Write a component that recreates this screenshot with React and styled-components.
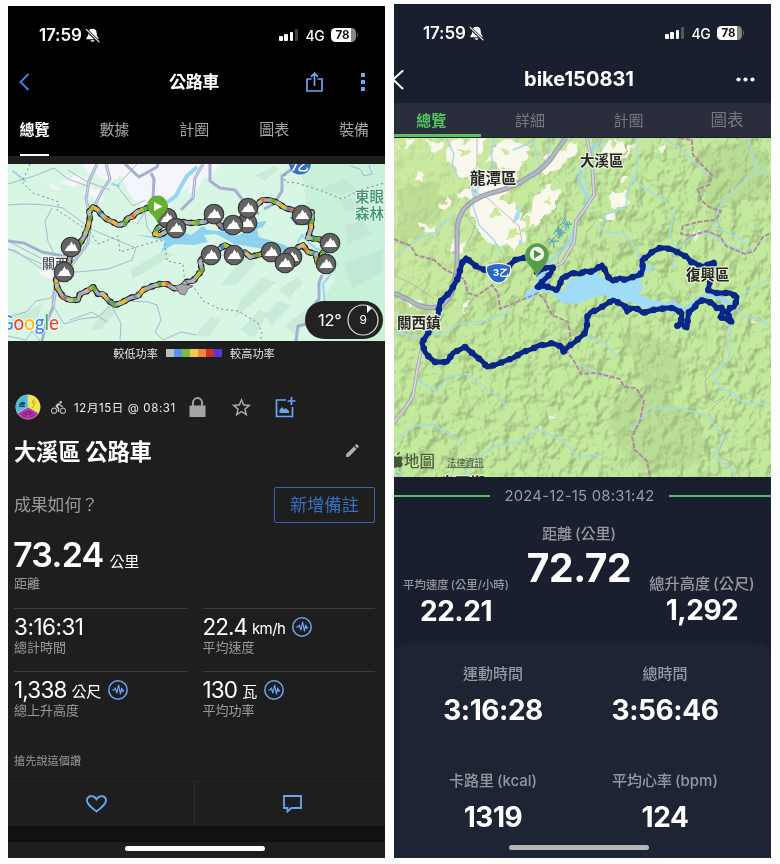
import React from 'react'
import styled, { createGlobalStyle } from 'styled-components'
import { MdDirectionsBike, MdEdit, MdStarBorder } from 'react-icons/md'

const blue = '#6ba4f5'
const green = '#56c25e'

const GlobalStyle = createGlobalStyle`
  * {
    box-sizing: border-box;
  }
  body {
    margin: 0;
    background: #fefefe;
    font-family: Inter, 'Noto Sans CJK TC', sans-serif;
  }
  svg {
    display: block;
    flex: none;
  }
`
const Page = styled.div`
  display: flex;
  gap: 9px;
  height: 864px;
  padding: 0 9px 0 8px;
  overflow: hidden;
`
const Phone = styled.div`
  width: 377px;
  height: ${props => 858 - props.top}px;
  margin-top: ${props => props.top}px;
  background: ${props => props.background};
  color: #fff;
  overflow: hidden;
  display: flex;
  flex-direction: column;
`


/* Status bar */

const StatusRow = styled.div`
  display: flex;
  align-items: center;
  flex: none;
  height: 58px;
  padding: 0 27px 0 ${props => props.indent}px;
`
const Clock = styled.div`
  font-size: 17px;
  font-weight: 600;
  line-height: 20px;
  letter-spacing: -0.15px;
  margin-right: 3px;
`
const Network = styled.div`
  font-size: 14px;
  font-weight: 500;
  letter-spacing: -0.3px;
  margin: 0 6px 0 7px;
`
const Bars = styled.div`
  display: flex;
  align-items: flex-end;
  gap: 1.7px;
  margin-left: auto;
`
const Bar = styled.div`
  width: 3.6px;
  height: ${props => props.size}px;
  border-radius: 1px;
  background: ${props => props.off ? 'rgba(255,255,255,0.25)' : '#fff'};
`
const Battery = styled.div`
  width: 25px;
  height: 13.5px;
  border-radius: 4.5px;
  background: linear-gradient(90deg, #fff 80%, #858585 80%);
  color: #111;
  font-size: 11.5px;
  font-weight: 700;
  line-height: 14px;
  text-align: center;
  padding-right: 1px;
`
const BatteryTip = styled.div`
  width: 1.5px;
  height: 4px;
  margin-left: 1px;
  border-radius: 0 2px 2px 0;
  background: #666;
`

const StatusBar = ({ background, indent }) => (
  <StatusRow indent={indent}>
    <Clock>17:59</Clock>
    <svg width="15" height="15" viewBox="0 0 15 15">
      <path d="M7.500 .8c-2.800 0-4.200 2-4.200 4.200 0 2.800-.6 3.800-1.900 5v1.200h12.200V10c-1.300-1.200-1.900-2.200-1.900-5C11.700 2.800 10.300.8 7.500.8zM5.400 12.200a2.200 2.200 0 0 0 4.200 0z" fill="#fff" />
      <path d="M1 1.500 14 14" stroke={background} strokeWidth="3" />
      <path d="M1.200 1.300 14 13.800" stroke="#fff" strokeWidth="1.100" strokeLinecap="round" />
    </svg>
    <Bars>
      <Bar size={4.5} />
      <Bar size={6.5} />
      <Bar size={9} />
      <Bar size={11.5} off />
    </Bars>
    <Network>4G</Network>
    <Battery>78</Battery>
    <BatteryTip />
  </StatusRow>
)

const HomeIndicator = styled.div`
  width: 140px;
  height: 5px;
  border-radius: 3px;
  background: ${props => props.color};
  margin: ${props => props.space}px auto 0 ${props => props.left}px;
`


/* Left phone */

const Black = styled.div`
  background: #000;
  flex: none;
  height: 150px;
`
const NavBar = styled.div`
  display: grid;
  grid-template-columns: 98px 1fr 110px;
  align-items: center;
  height: 36px;
  padding: 0 4px 0 11px;
`
const NavTitle = styled.div`
  font-size: 17px;
  font-weight: 700;
  line-height: 24px;
  text-align: center;
  letter-spacing: -0.3px;
`
const NavActions = styled.div`
  display: flex;
  align-items: center;
  justify-content: flex-end;
  gap: 38px;
  padding-right: 16px;
`
const Tabs = styled.div`
  display: flex;
  justify-content: space-between;
  margin-top: 16px;
  padding: 0 16px 0 11.500px;
`
const Tab = styled.div`
  height: 40px;
  line-height: 28px;
  font-size: 15px;
  letter-spacing: -0.1px;
  font-weight: ${props => props.active ? 700 : 400};
  color: ${props => props.active ? '#fff' : '#a6a6a6'};
  border-bottom: 2px solid ${props => props.active ? '#fff' : 'transparent'};
`
const MapBox = styled.div`
  position: relative;
  flex: none;
  height: ${props => props.height}px;
  margin-top: ${props => props.gap || 0}px;
  overflow: hidden;
`
const Weather = styled.div`
  position: absolute;
  right: 2px;
  bottom: 2px;
  width: 78px;
  height: 38px;
  border-radius: 19px;
  background: #222;
  display: flex;
  align-items: center;
  padding-left: 13px;
  gap: 5px;
  font-size: 16.500px;
  letter-spacing: -0.2px;
`
const Legend = styled.div`
  display: flex;
  align-items: center;
  justify-content: center;
  gap: 8px;
  flex: none;
  height: 23px;
  padding-right: 5px;
  font-size: 11.200px;
  color: #e4e4e4;
`
const Swatches = styled.div`
  display: flex;
`
const Swatch = styled.div`
  width: 8px;
  height: 8px;
  background: ${props => props.color};
`
const Meta = styled.div`
  display: flex;
  align-items: center;
  flex: none;
  height: 36px;
  margin-top: 25px;
  padding-left: 7px;
`
const MetaDate = styled.div`
  width: 115px;
  margin-left: 8px;
  padding-bottom: 1px;
  font-size: 11.500px;
  letter-spacing: 0.6px;
  color: #eee;
  white-space: nowrap;
`
const TitleRow = styled.div`
  display: flex;
  align-items: center;
  justify-content: space-between;
  flex: none;
  height: 40px;
  margin-top: 5px;
  padding: 0 24px 0 6px;
  font-size: 22.300px;
  font-weight: 700;
  letter-spacing: -0.2px;
`
const NoteRow = styled.div`
  display: flex;
  align-items: center;
  justify-content: space-between;
  flex: none;
  height: 36px;
  margin-top: 17px;
  padding: 0 10px 0 6px;
  font-size: 17px;
  line-height: 24px;
  letter-spacing: -0.2px;
  color: #999;
`
const NoteButton = styled.button`
  width: 101px;
  height: 36px;
  padding: 0 0 1px;
  border: 1px solid #3565b4;
  border-radius: 2px;
  background: none;
  color: #3a6fc6;
  font: inherit;
  letter-spacing: 0.2px;
`
const Hero = styled.div`
  display: flex;
  align-items: baseline;
  gap: 6px;
  flex: none;
  height: 46px;
  margin-top: 9px;
  padding-left: 5px;
  font-size: 34px;
  font-weight: 600;
  line-height: 46px;
  letter-spacing: -0.7px;
`
const Unit = styled.span`
  font-size: 15px;
  font-weight: 400;
  line-height: 20px;
  letter-spacing: ${props => props.tight ? -0.6 : -0.3}px;
`
const Caption = styled.div`
  font-size: 13px;
  line-height: 18px;
  color: #9a9a9a;
`
const HeroCaption = styled(Caption)`
  flex: none;
  padding-left: 6px;
  margin-top: -4px;
`
const Stats = styled.div`
  display: grid;
  grid-template-columns: 1fr 1fr;
  grid-auto-rows: 63px;
  column-gap: 16px;
  margin-top: 16px;
  padding: 0 10px 0 6px;
  flex: none;
`
const Stat = styled.div`
  border-top: 1px solid #3c3c3c;
  padding-top: 4px;
`
const StatValue = styled.div`
  display: flex;
  align-items: center;
  height: 28px;
  font-size: 22.5px;
  line-height: 28px;
  letter-spacing: ${props => props.spacing}px;

  ${Unit} {
    margin: 4px 7px 0 5px;
  }
`
const StatCaption = styled(Caption)`
  margin-top: -3px;
`
const FirstLike = styled.div`
  flex: none;
  margin-top: 19px;
  padding-left: 6px;
  font-size: 11.200px;
  line-height: 16px;
  color: #9a9a9a;
`
const ActionBar = styled.div`
  display: grid;
  grid-template-columns: 187px 1fr;
  flex: none;
  height: 45px;
  margin-top: 12px;
  border-top: 1px solid #262626;
`
const Action = styled.div`
  display: flex;
  align-items: center;
  justify-content: center;
  padding-left: 5px;

  &:first-child {
    padding: 0 10px 0 0;
    border-right: 1px solid #2b2b2b;
  }
`
const DarkStrip = styled.div`
  flex: none;
  height: 16px;
  background: #111;
`

const Pulse = () => (
  <svg width="20" height="20" viewBox="0 0 20 20" fill="none" stroke={blue}>
    <circle cx="10" cy="10" r="9.200" strokeWidth="1.500" />
    <path d="M4 10h2l1.300-2 1.600 5 1.700-8 1.800 9 1.300-6 1.100 3.500L16 10" strokeWidth="1.200" strokeLinejoin="round" />
  </svg>
)

const ride = 'M147 208L142 210L137 212L132 217L128 218L124 224L118 225L113 222L108 220L104 217L100 213L98 210L93 207L89 212L90 217L88 227L84 237L79 245L71 252L69 262L64 272L56 279L57 287L63 297L70 300L78 300L80 294L87 291L93 287L98 294L103 294L109 301L115 305L121 303L130 298L138 296L143 290L153 286L160 284L167 284L173 288L180 289L186 282L193 281L198 275L202 270L200 261L207 255L218 250L225 245L230 248L235 255L245 252L250 257L258 255L270 252L280 260L285 263L292 257L297 248L303 245L308 252L316 254L317 262L325 264L322 254L330 243L318 239L308 238L311 228L312 212L302 215L293 210L285 208L278 203L270 200L262 200L257 205L248 208L247 223L233 225L223 228L218 223L214 214L205 222L190 223L183 222L176 228L169 230L160 235L155 234L157 229L164 224L167 218'

const powerDashes = [
  ['#a4c43c', '9 13', 0],
  ['#3f8ae8', '4 25', 3],
  ['#f3b437', '5 18', 9],
  ['#ee6f2c', '3 28', 16],
  ['#67ac3f', '5 21', 27],
  ['#b8b9c0', '4 17', 12],
]

const peaks = [
  [167, 218], [176, 228], [71, 247], [64, 272], [247, 223], [214, 214],
  [233, 225], [248, 208], [302, 215], [330, 243], [326, 264], [292, 257],
  [271, 252], [285, 263], [234, 255], [211, 255],
]

const Peak = ({ x, y }) => (
  <g transform={`translate(${x} ${y})`}>
    <circle r="9.800" fill="#646464" stroke="#303030" strokeWidth="1.100" />
    <path d="M-6.500 4l3.500-5.500 1 .5 2.500-4.500 2 3.500 1.200-1L7 4z" fill="#fff" />
  </g>
)

const MapLabel = styled.text`
  font-size: ${props => props.size}px;
  font-weight: ${props => props.weight || 500};
  fill: ${props => props.color};
  stroke: ${props => props.halo || 'none'};
  stroke-width: 2.5px;
  stroke-linejoin: round;
  paint-order: stroke;
`
const GoogleMark = styled.text`
  font-family: Lato, sans-serif;
  font-size: 21px;
  font-weight: 500;
  stroke: #fff;
  stroke-width: 1.5px;
  paint-order: stroke;
`

const PowerMap = () => (
  <svg width="377" height="177" viewBox="8 164 377 177">
    <rect x="8" y="164" width="377" height="177" fill="#d8f6e4" />
    <path d="M300 164h85v177H330l-15-30 20-30-5-30-20-25z" fill="#c9f0d9" />
    <g fill="#f5f6fb">
      <path d="M95 164h55l-6 8-8-2-4 6h-12l-9 6-14-6z" />
      <path d="M124 170l32-6h44l-6 18-18 15-12 18-18-4-15-15-8-14z" />
      <path d="M45 181l19 9-12-1zM60 183l18-9 11 6-14 7zM82 193l9-8 5 12zM82 164l6 10 8-6-2-4zM38 272l8-5 14 4 1 6-14 1z" />
      <path d="M195 164h26l-10 12-8 2-6 12-9 4zM90 192l10-4 4 12-8 3z" />
    </g>
    <g fill="#bfe3d2" opacity=".55">
      <path d="M240 300l22-22 14 4-22 20-20 16zM278 290l18-12 8 4-15 16zM220 286l26-32 10 9-20 22zM240 330l20-20 8 3-14 25zM265 315l14-14 12 5-20 20z" />
      <path d="M320 190l25-12 12 12-16 5zM345 225l18-5 8 14-24 10zM340 200l32-3-13 13-14 1zM130 270l35-20 8 5-40 24zM285 325l20-15 6 6-16 20z" />
      <path d="M343 264l40-15v22l-30 18zM195 335l16-18 10 3-12 17zM12 316l30-12-4 14-28 13zM255 176l18-10 6 3-14 12zM90 330l18-25 12 2-18 22z" />
    </g>
    <g fill="none" stroke="#96d6ee" strokeWidth="3" strokeLinecap="round">
      <path d="M196 168l-9 8-7 12-4 8-7 5" strokeWidth="4" />
      <path d="M298 242l4-7 8 9 7 5 8 2 8 8 2 10-12 15 2 22" strokeWidth="2" />
      <path d="M13 171l12 10M112 184l7 2" strokeWidth="2" />
    </g>
    <path d="M136 235l14 1 8 2 10-5 15-1 8 3 12-9 4 4 22 2 8 4 12-6 8-8 10-1-4 6-6 2 2 8 14 4 12 4 5 4-8 3-30-5-18-3-18-10-12 1 4 7-14 3-20-1-13 8 4-11-13-3z" fill="#8fd2ef" />
    <g fill="none" stroke="#adb5d0" strokeWidth="1">
      <path d="M8 184l26-8 20-8 14 11 22 8M8 205q30-3 55 3l30 22 43 18-4 12-24 9-30 3-35-2-27-19-8-2M52 208l-7 13 3 20 12 25M8 241l42 22M8 249l45 20 4-4M59 280l-8 18-15 3-10 11-18 5M54 284l-2 20 12 20 16-5 18-2 13-12 10 18-1 17M70 320l22-8 15 10M40 341l-8-10-6 9-18-4M120 304l8-3 20 1 9 3 4 15-6 12 8 8 18-8 15 3M137 224l8-12 2 15 6 8" />
      <path d="M137 164l-20 22 16 20 12-6M110 190l-22-8-20-12M350 166l10 3 4 7 8-2-3-9" />
    </g>
    <g fill="none" stroke="#a6afcf" strokeWidth="3" strokeLinejoin="round">
      <path d="M97 164l-8 17-3 18 5 20-3 24-18 24-13 15-4 25-7 17-4 17M106 164l4 15-8 12-8 16M125 164l14 13 18-10 1-4M151 173l3 6-1 20" />
      <path d="M8 241l16 2 18 9 26 5M203 164l-8 14-2 20-12 12M210 164v17l10 7 15 2 14 18 10 6M299 164l-17 12v15l-8 13-10 5M322 275l-3 8v16l-11 12 2 12-12 3-2 15" />
    </g>
    <g fill="none" stroke="#e3e8f3" strokeWidth=".8">
      <path d="M97 164l-8 17-3 18 5 20-3 24-18 24-13 15-4 25M106 164l4 15-8 12-8 16M203 164l-8 14-2 20" />
    </g>
    <path d="M30 164l-8 18 11 11 26 9-2 8 33 22 8 12 20-8 2 16 40-12 5 4 2 17 16 3 2 20 10 5 8 12 17 8 18 2 20 12 4 10-4 18M285 174v8l12 1 25 8 20 8 20-10 23-6" fill="none" stroke="#6f8d87" strokeWidth="1" strokeDasharray="2 3" />
    <MapLabel x="42" y="268" size="13" color="#454a52" halo="#f5fbf8">關西</MapLabel>
    <MapLabel x="355" y="202" size="14.500" color="#43907b" halo="#d8f4e4">東眼山</MapLabel>
    <MapLabel x="355" y="219" size="14.500" color="#43907b" halo="#d8f4e4">森林遊</MapLabel>
    <path d="M288 158h24q-1 12-6 15-6 3-12 0-5-3-6-15z" fill="#3a70c5" />
    <MapLabel x="291" y="171" size="11" color="#fff" weight={700}>7乙</MapLabel>
    <path d="M290 217l6 8h12l3-7z" fill="#3567b1" />
    <path d={ride} fill="none" stroke="#252525" strokeWidth="5.600" strokeLinejoin="round" />
    <path d={ride} fill="none" stroke="#252525" strokeWidth="6.600" strokeLinecap="round" strokeDasharray="0 8" />
    <path d={ride} fill="none" stroke="#abaab6" strokeWidth="3.600" strokeLinejoin="round" />
    {powerDashes.map(([color, dash, offset]) => (
      <path key={color} d={ride} fill="none" stroke={color} strokeWidth="3.600" strokeDasharray={dash} strokeDashoffset={offset} />
    ))}
    <path d="M175 286l7-2 11 2-5 3-3 6-5-1z" fill="#a7a7ad" stroke="#444" strokeWidth=".6" />
    {peaks.map(([x, y]) => <Peak key={`${x}-${y}`} x={x} y={y} />)}
    <path d="M157.500 222c-2-7-10-9-10-16a10 10 0 0 1 20 0c0 7-8 9-10 16z" fill="#63b22f" stroke="#4b9322" strokeWidth=".8" />
    <path d="M154 202l8.500 4.500-8.500 4.500z" fill="#fff" />
    <GoogleMark x="0" y="330" textLength="59" lengthAdjust="spacingAndGlyphs">
      <tspan fill="#4285f4">G</tspan>
      <tspan fill="#ea4335">o</tspan>
      <tspan fill="#fbbc05">o</tspan>
      <tspan fill="#4285f4">g</tspan>
      <tspan fill="#34a853">l</tspan>
      <tspan fill="#ea4335">e</tspan>
    </GoogleMark>
  </svg>
)

const stats = [
  { value: '3:16:31', label: '總計時間', spacing: -0.5 },
  { value: '22.4', unit: 'km/h', label: '平均速度', chart: true, tight: true, spacing: -1 },
  { value: '1,338', unit: '公尺', label: '總上升高度', chart: true },
  { value: '130', unit: '瓦', label: '平均功率', chart: true },
]

const RidePhone = () => (
  <Phone top={6} background="#1e1e1e">
    <Black>
      <StatusBar background="#000" indent={31} />
      <NavBar>
        <svg width="11" height="18" viewBox="0 0 11 18" fill="none" stroke="#3d83f0" strokeWidth="1.900">
          <path d="M9.500 1 1.500 9l8 8" />
        </svg>
        <NavTitle>公路車</NavTitle>
        <NavActions>
          <svg width="17" height="20" viewBox="0 0 17 20" fill="none" stroke={blue} strokeWidth="1.700">
            <path d="M5.500 7H1v12h15V7h-4.500M8.500 14V1.500M5 4.800l3.500-3.500L12 4.800" />
          </svg>
          <svg width="4" height="18" viewBox="0 0 4 18" fill={blue}>
            <path d="M0 0h4v4H0zM0 7h4v4H0zM0 14h4v4H0z" />
          </svg>
        </NavActions>
      </NavBar>
      <Tabs>
        <Tab active>總覽</Tab>
        <Tab>數據</Tab>
        <Tab>計圈</Tab>
        <Tab>圖表</Tab>
        <Tab>裝備</Tab>
      </Tabs>
    </Black>
    <MapBox height={177} gap={8}>
      <PowerMap />
      <Weather>
        <span>12°</span>
        <svg width="32" height="32" viewBox="0 0 32 32">
          <circle cx="16" cy="16" r="15" fill="none" stroke="#ddd" strokeWidth="1.200" />
          <path d="M20 1l5 3-5 5z" fill="#fff" />
          <MapLabel x="12.500" y="20" size="12" color="#fff" weight={400}>9</MapLabel>
        </svg>
      </Weather>
    </MapBox>
    <Legend>
      <span>較低功率</span>
      <Swatches>
        {['#bdbdc1', '#5795ea', '#7ebd3c', '#f1c94e', '#ec8c39', '#c6302d', '#5a36d2'].map(color => (
          <Swatch key={color} color={color} />
        ))}
      </Swatches>
      <span>較高功率</span>
    </Legend>
    <Meta>
      <svg width="26" height="26" viewBox="0 0 26 26">
        <circle cx="13" cy="13" r="12.500" fill="#bfc3bd" />
        <path d="M13 13V1A12 12 0 0 0 2.600 19z" fill="#4fb8dc" />
        <path d="M13 13V1a12 12 0 0 1 10.400 18z" fill="#f0eb42" />
        <path d="M13 13 2.600 19a12 12 0 0 0 20.800 0z" fill="#b936ad" />
        <path d="M13 13V1M13 13 2.600 19M13 13l10.400 6" stroke="#d6d6cc" strokeWidth=".8" />
        <path d="M4 11l3-3 3 1-1 2zM4 12.500h6" stroke="#164c63" fill="#164c63" />
        <path d="M19 5l-2 4 3 1-3 4m1-7 3 1" stroke="#c8a421" fill="none" />
        <g fill="none" stroke="#6b1768" strokeWidth=".7">
          <circle cx="9.500" cy="20.500" r="2" />
          <circle cx="16.500" cy="20.500" r="2" />
          <path d="M9.500 20.500l2.500-3h3l-2 3zM15 17l1.500 3.500" />
        </g>
      </svg>
      <MdDirectionsBike size={15} color="#ccc" style={{ marginLeft: 10 }} />
      <MetaDate>12月15日 @ 08:31</MetaDate>
      <svg width="17" height="20" viewBox="0 0 17 20">
        <path d="M.5 8.500h16V20H.5z" fill="#a4a4a4" />
        <path d="M4 9V5.500a4.500 4.500 0 0 1 9 0V9" fill="none" stroke="#a4a4a4" strokeWidth="1.900" />
      </svg>
      <MdStarBorder size={23} color="#a8a8a8" style={{ marginLeft: 24 }} />
      <svg width="21" height="21" viewBox="0 0 21 21" fill="none" stroke={blue} strokeWidth="1.700" style={{ marginLeft: 22 }}>
        <path d="M11 3H1.500v16.500H17.500V10M16.500 0v8M12.500 4h8" />
        <path d="M4.500 16v-3l2.500-3 2 2.500 1.500-1.500 3.500 3v2z" fill={blue} stroke="none" />
      </svg>
    </Meta>
    <TitleRow>
      大溪區 公路車
      <MdEdit size={17} color="#b0b0b0" />
    </TitleRow>
    <NoteRow>
      成果如何？
      <NoteButton>新增備註</NoteButton>
    </NoteRow>
    <Hero>73.24<Unit>公里</Unit></Hero>
    <HeroCaption>距離</HeroCaption>
    <Stats>
      {stats.map(stat => (
        <Stat key={stat.label}>
          <StatValue spacing={stat.spacing || -0.85}>
            {stat.value}
            {stat.unit && <Unit tight={stat.tight}>{stat.unit}</Unit>}
            {stat.chart && <Pulse />}
          </StatValue>
          <StatCaption>{stat.label}</StatCaption>
        </Stat>
      ))}
    </Stats>
    <FirstLike>搶先說這個讚</FirstLike>
    <ActionBar>
      <Action>
        <svg width="21" height="18" viewBox="0 0 21 18" fill="none" stroke={blue} strokeWidth="1.900">
          <path d="M10.500 16.500C5 12 1 9.200 1 5.500 1 .5 7.500-.5 10.500 4.200 13.500-.5 20 .5 20 5.500c0 3.700-4 6.500-9.500 11z" />
        </svg>
      </Action>
      <Action>
        <svg width="19" height="18" viewBox="0 0 19 18" fill="none" stroke={blue} strokeWidth="1.800">
          <path d="M1 1h17v12H8.500l-4 3.500V13H1z" />
        </svg>
      </Action>
    </ActionBar>
    <DarkStrip />
    <HomeIndicator color="#fff" space={4} left={117} />
  </Phone>
)


/* Right phone */

const RouteNav = styled.div`
  display: grid;
  grid-template-columns: 20px 1fr 20px;
  align-items: center;
  flex: none;
  height: 41px;
  padding: 0 15px 7px 0;
`
const RouteTitle = styled.div`
  font-size: 20px;
  font-weight: 700;
  line-height: 26px;
  text-align: center;
  letter-spacing: 0;
  padding-left: 8px;
`
const RouteTabs = styled.div`
  display: grid;
  grid-template-columns: repeat(4, 98.600px);
  flex: none;
  height: 34px;
  margin-left: -12px;
  background: #292d3c;
`
const RouteTab = styled.div`
  height: 33.500px;
  line-height: 35px;
  text-align: center;
  font-size: ${props => props.size || 15}px;
  font-weight: ${props => props.active ? 700 : 400};
  color: ${props => props.active ? green : '#777982'};
  border-bottom: 3px solid ${props => props.active ? green : 'transparent'};
`
const DateRow = styled.div`
  display: flex;
  align-items: center;
  flex: none;
  height: 37px;
  gap: 13px;
  color: #999ca5;
  font-size: 14.800px;
`
const Line = styled.div`
  height: 2px;
  background: ${green};
  flex: none;
  width: ${props => props.width}px;
`
const DateText = styled.div`
  flex: 1;
  text-align: center;
  white-space: nowrap;
  letter-spacing: 0.25px;
`
const Summary = styled.div`
  display: grid;
  grid-template-columns: 124px 122px 1fr;
  align-items: start;
  flex: none;
  height: 130px;
  padding-right: 7px;
  text-align: center;
  white-space: nowrap;
`
const Metric = styled.div`
  padding-top: ${props => props.drop || 0}px;
`
const MetricLabel = styled.div`
  color: #9698a0;
  font-size: ${props => props.size || 15}px;
  font-weight: 500;
  line-height: 20px;
  word-spacing: -1px;
`
const MetricValue = styled.div`
  font-size: ${props => props.size || 28}px;
  font-weight: 700;
  line-height: ${props => props.lineHeight || 34}px;
  letter-spacing: -0.45px;
`
const SideValue = styled(MetricValue)`
  margin-top: -1px;
`
const Card = styled.div`
  flex: 1;
  border-radius: 14px 14px 0 0;
  background: #1d2535;
`
const CardGrid = styled.div`
  display: grid;
  grid-template-columns: 172px 172px;
  grid-auto-rows: 107px;
  padding: 20px 0 0 13px;
  height: 200px;
  text-align: center;
`
const CardValue = styled(MetricValue)`
  margin-top: 9px;
`

const track = 'M537 272L545 268L553 267L551 273L546 278L542 282L537 287L545 286L551 288L557 290L560 284L562 278L567 276L572 273L580 274L585 271L590 272L595 270L602 265L605 270L608 277L613 281L620 278L625 280L630 278L636 276L640 275L643 269L642 260L648 256L652 252L656 250L660 248L666 248L673 250L679 253L687 257L691 262L695 263L701 267L707 265L714 262L713 268L711 275L710 282L708 290L716 293L723 293L730 293L737 297L736 302L734 307L730 308L727 313L732 322L726 319L720 317L723 312L722 307L717 308L712 303L703 300L697 303L695 307L689 312L688 317L687 328L682 324L677 326L681 322L682 313L673 308L667 308L660 309L653 310L643 313L638 309L630 308L627 312L625 306L619 303L613 300L605 305L597 310L591 312L587 317L587 325L585 333L575 342L569 346L563 352L562 347L552 343L546 345L540 345L532 349L523 352L513 358L505 361L495 365L487 367L482 361L477 357L471 352L465 347L459 350L453 353L447 362L435 362L429 357L425 352L422 343L428 333L438 321L438 315L440 302L450 292L458 278L462 263L466 258L477 267L490 272L507 268L515 260L527 257L537 260'

const RouteMap = () => (
  <svg width="377" height="339" viewBox="394 138 377 339">
    <defs>
      <filter id="relief" x="0" y="0" width="100%" height="100%" colorInterpolationFilters="sRGB">
        <feTurbulence type="fractalNoise" baseFrequency="0.075 0.06" numOctaves="3" seed="14" />
        <feDiffuseLighting surfaceScale="9" diffuseConstant="1.250" lightingColor="#fff">
          <feDistantLight azimuth="225" elevation="56" />
        </feDiffuseLighting>
      </filter>
      <filter id="ragged" filterUnits="userSpaceOnUse" x="394" y="138" width="377" height="339">
        <feTurbulence type="fractalNoise" baseFrequency=".09" numOctaves="2" seed="5" />
        <feDisplacementMap in="SourceGraphic" scale="18" xChannelSelector="R" yChannelSelector="G" />
      </filter>
      <linearGradient id="valley" x1="0" y1="0" x2="1" y2=".7">
        <stop offset=".1" stopColor="#d0eaa2" stopOpacity=".65" />
        <stop offset=".42" stopColor="#d0eaa2" stopOpacity="0" />
      </linearGradient>
    </defs>
    <rect x="394" y="138" width="377" height="339" fill="#c3e99d" />
    <rect x="394" y="138" width="377" height="339" filter="url(#relief)" opacity=".2" style={{ mixBlendMode: 'multiply' }} />
    <rect x="394" y="138" width="377" height="339" fill="url(#valley)" />
    <g fill="#a3c480" opacity=".3" filter="url(#ragged)">
      <path d="M610 410l20-22 38 8 30 20 10 35-20 20h-45l-28-25zM700 150l45-10 26 20v35l-45 10-18 25zM620 330l50 12 20 30-35 35-22-45zM400 300l45 20-20 25-30-8zM398 190l40-10 10 25-30 35-24 5z" />
    </g>
    <g fill="#faf7ed" filter="url(#ragged)">
      <path d="M425 142l12-3 8 5-8 8-10-2zM447 146l9-5 12 2v-5h18l-3 12-7 6 2 15-5 7-14-4-6-12-7-2zM470 171l28 6 12-8 8 9-10 15-22 15-18-3zM470 205l14-10 22 7 16 12 2 10-2 14-6 15-10-6-14-2-12-18-9-9z" />
      <path d="M452 154l10 2 4 14-10-3zM401 139l16-1-2 6-12 4zM415 178l7-3 2 6-6 1zM460 192l14-7 3 8-8 5zM437 204l12-4-1 8-10 2zM417 222l12 5 12 3-4 4-17-5zM450 245l16-5-2 10-11 4zM535 195l12-8 12 6-5 15-12 9-9 8-8-6 8-12z" />
      <path d="M492 145l16-5 22 7-7 10-12 4-9 12-12-11zM544 158l14-9 18-6 3 9-15 11-18 11zM508 155l14 7-6 9-12-2zM604 146l13-5 8 2-4 9-13 14-8-1zM611 190l15 2-2 11-10 6-6-8zM599 218l10-4 5 2-10 7zM628 147l5-3-2 12-9 4zM662 145l3 4-2 6-4-2zM620 179l6-2 3 4-8 2zM692 230l6-1 5 5-9 2zM550 415l5-2-2 4zM539 431l4-2v3zM410 299l12 3-3 4-10-2zM466 303l7-1-3 8-7-2zM752 321l5 1-4 3z" />
    </g>
    <g fill="#cde99f" filter="url(#ragged)">
      <path d="M474 176l8 2-3 5-7-1zM496 183l9-5 3 6-8 4zM489 213l8-4 5 7-9 3zM507 232l8-5 4 6-7 6zM459 150l6-2 2 7-6 2zM545 196l6 2-4 6zM499 150l8-4 3 7-7 3z" />
    </g>
    <g fill="none" stroke="#a5dbe6" strokeWidth="1.500" strokeLinejoin="round">
      <path d="M396 255l25-18 15-5 8-11 18-5M446 138l8 16-2 11 7 14M494 138l-3 15 3 15-14 16-8 18 7 23 15 15 8 14M513 150l20-8 7 25-6 13M551 142l-4 21-20 12M605 138l-20 33 3 25M636 138l2 28-8 20-4 20-21 9-4 14M630 175l10 10 25 16 4-2M664 138l20 13 12 13 14 11" />
      <path d="M748 138l9 32-27 24-12 15-3 18 21 10 19 15M757 170l14 6M675 210l-5 20 3 15M700 232l-25 18-3 20M700 230l15 8 31 16M771 278l-15 8-15 10M712 295l15 4 16 17 15 3 13 8M731 323l-2 37-16 14 7 14 14 5 9 10 28 1M395 440l18-14 21-1 20 12 9 7M463 475l18-19 12-9 32-7 12-11 26 12 15 16 27-3M395 470l8 5M415 379l14 8 8 4 11-15 20-2 28 22 12 11M580 335l25 8 12 15M580 365l25 12M632 430l5-8 18-13 25-1 28 8 12 17 6 4-13 20 19 12 3 8M395 332l20 5 30-4 15-10 25-2 25-10M602 232l22 2 14 17 4 12" />
    </g>
    <g fill="none" stroke="#a1d7ed" strokeWidth="3">
      <path d="M598 142l-17 22-2 18 10 18-12 20-7 22-17 17-14 10M535 290l-10 6" />
      <path d="M671 302l14 8 12-10 12-6 18 8 6 10" strokeWidth="4" />
    </g>
    <path d="M471 190l5-2 2 7-5 4zM516 212l6-8-3 15-7 5zM519 239l4 3-4 4z" fill="#b3dce9" />
    <path d="M524 292l12-5 2-22 8 2 5 12-9 9 12 5 10-3 6-13 4 3 8-4 15-3 6 5 8 5 9-1 12-4 4-8 6-2 14-3-5 5-9 4-2 8 4 4-4 9 10 4 15 4 6-1 10 5 3 7-14-2-12-5-13 1-14-6-16-1-10-6-14 3-14 6-15-1-9-9-12-3-6 4-3 6-8-3 3-5z" fill="#a0dbf8" />
    <g fill="none" stroke="#aea6ae" strokeWidth="1" opacity=".7">
      <path d="M477 138v25l-5 27 15 8 32 28 3 15M460 207l15 20-8 18M532 178l11-16 16-14M568 235l-10 24 1 12M727 325l-5 37-17 19 2 15 8 6 10-6-17 17 8 10 11 10-8 18 2 7 13 5 6 15M394 275l20 10 20 14" />
    </g>
    <g fill="none" strokeLinejoin="round">
      <path d="M566 138l-9 12q-12 20-30 28-12 9-32 14-24 6-33 20-5 9-5 20v35l-5 25q-5 12-15 15-14 3-28-7l-15-7" stroke="#9399a8" strokeWidth="5" />
      <path d="M566 138l-9 12q-12 20-30 28-12 9-32 14-24 6-33 20-5 9-5 20v35l-5 25q-5 12-15 15-14 3-28-7l-15-7" stroke="#b4b8c2" strokeWidth="3" />
      <path d="M587 138l5 25 2 32-8 12-10 14-2 22-12 20-9 4M423 341l-6 30-4 25-9 14-10 12" stroke="#a3a3b1" strokeWidth="3.500" />
      <path d="M587 138l5 25 2 32-8 12-10 14-2 22-12 20-9 4M423 341l-6 30-4 25-9 14-10 12" stroke="#d7d5dc" strokeWidth="1.800" />
    </g>
    <g fill="none" stroke="#ae8aa3" strokeWidth="2" strokeDasharray="5 1.500">
      <path d="M394 239l17 7 5 9 18 5 10 9 20 10 4 14 9 3 15-11 6 8 2 16 38-16 6 6 8 16 16 7 3 17-6 10 9 12 7 13 15-1 24 6 4 8 12 1 8 13-4 20-8 16 3 13 12 11 3 16-6 18" />
      <path d="M679 138l13 2 1 15 8 9 11 11-3 10-11 4 3 11 8 7 12 4-5 9-18 2-15 4-2 8 10 2 15-5 14 5 6 10 19 8 9-3 9-14 15-8" />
    </g>
    <path d={track} fill="none" stroke="#092789" strokeWidth="5" strokeLinejoin="round" strokeLinecap="round" />
    <path d={track} fill="none" stroke="#092789" strokeWidth="6.600" strokeLinecap="round" strokeDasharray="0 9" />
    <MapLabel x="0" y="0" size="10.500" color="#4e9fbe" transform="translate(553 248) rotate(-53)">大漢溪</MapLabel>
    <path d="M487 266q11-5 23 0 2 4-1 9-5 8-10 8-7 0-11-8-3-5-1-9z" fill="#2c68cb" stroke="#fff" strokeWidth="1.200" />
    <MapLabel x="493" y="276" size="9.500" color="#fff" weight={700}>3乙</MapLabel>
    <path d="M537 277c-2-9-11.500-12-11.500-22a11.500 11.500 0 0 1 23 0c0 10-9.500 13-11.500 22z" fill="#51a047" stroke="#8c9c62" strokeWidth="1" />
    <circle cx="537" cy="254" r="7.200" fill="#f2f5ec" />
    <path d="M534 250l7.500 4-7.500 4.500z" fill="#42933a" />
    <MapLabel x="470" y="184" size="15.500" color="#252729" halo="#f5f5e8" weight={600}>龍潭區</MapLabel>
    <MapLabel x="580" y="166" size="14.500" color="#252729" halo="#e9f1d2" weight={600}>大溪區</MapLabel>
    <MapLabel x="686" y="280" size="14.500" color="#252729" halo="#e3efc9" weight={600}>復興區</MapLabel>
    <MapLabel x="397" y="328" size="14.500" color="#252729" halo="#edf3da" weight={600}>關西鎮</MapLabel>
    <MapLabel x="440" y="488" size="15" color="#252729" halo="#e3efc9" weight={600}>尖石鄉</MapLabel>
    <path d="M392 458q3-3 5-1 4-2 6 1-3 3 0 6-2 5-5 3-3 2-6-1zM397 455q0-3 3-3 0 3-3 3z" fill="#435539" />
    <MapLabel x="404" y="467" size="15.500" color="#4d6040" weight={500}>地圖</MapLabel>
    <MapLabel x="447" y="466" size="9.200" color="#55664a" weight={500} textDecoration="underline">法律資訊</MapLabel>
  </svg>
)

const details = [
  { label: '運動時間', value: '3:16:28' },
  { label: '總時間', value: '3:56:46' },
  { label: '卡路里 (kcal)', value: '1319' },
  { label: '平均心率 (bpm)', value: '124' },
]

const RoutePhone = () => (
  <Phone top={4} background="#191f2e">
    <StatusBar background="#191f2e" indent={29} />
    <RouteNav>
      <svg width="10" height="22" viewBox="0 0 10 22" fill="none" stroke="#fff" strokeWidth="2" strokeLinecap="round">
        <path d="M8.500 3-1 11.500l9.500 9" />
      </svg>
      <RouteTitle>bike150831</RouteTitle>
      <svg width="19" height="5" viewBox="0 0 19 5" fill="#fff">
        <circle cx="2.500" cy="2.500" r="2.100" />
        <circle cx="9.500" cy="2.500" r="2.100" />
        <circle cx="16.500" cy="2.500" r="2.100" />
      </svg>
    </RouteNav>
    <RouteTabs>
      <RouteTab active>總覽</RouteTab>
      <RouteTab>詳細</RouteTab>
      <RouteTab>計圈</RouteTab>
      <RouteTab size={16.5}>圖表</RouteTab>
    </RouteTabs>
    <MapBox height={339} gap={1}>
      <RouteMap />
    </MapBox>
    <DateRow>
      <Line width={96} />
      <DateText>2024-12-15 08:31:42</DateText>
      <Line width={102} />
    </DateRow>
    <Summary>
      <Metric drop={61}>
        <MetricLabel size={11.4}>平均速度 (公里/小時)</MetricLabel>
        <SideValue>22.21</SideValue>
      </Metric>
      <Metric drop={10}>
        <MetricLabel>距離 (公里)</MetricLabel>
        <MetricValue size={39} lineHeight={47}>72.72</MetricValue>
      </Metric>
      <Metric drop={60}>
        <MetricLabel size={15.2}>總升高度 (公尺)</MetricLabel>
        <SideValue>1,292</SideValue>
      </Metric>
    </Summary>
    <Card>
      <CardGrid>
        {details.map(item => (
          <div key={item.label}>
            <MetricLabel>{item.label}</MetricLabel>
            <CardValue>{item.value}</CardValue>
          </div>
        ))}
      </CardGrid>
      <HomeIndicator color="#b5b5b7" space={1} left={115} />
    </Card>
  </Phone>
)

export default class App extends React.PureComponent {
  render() {
    return (
      <Page>
        <GlobalStyle />
        <RidePhone />
        <RoutePhone />
      </Page>
    )
  }
}
